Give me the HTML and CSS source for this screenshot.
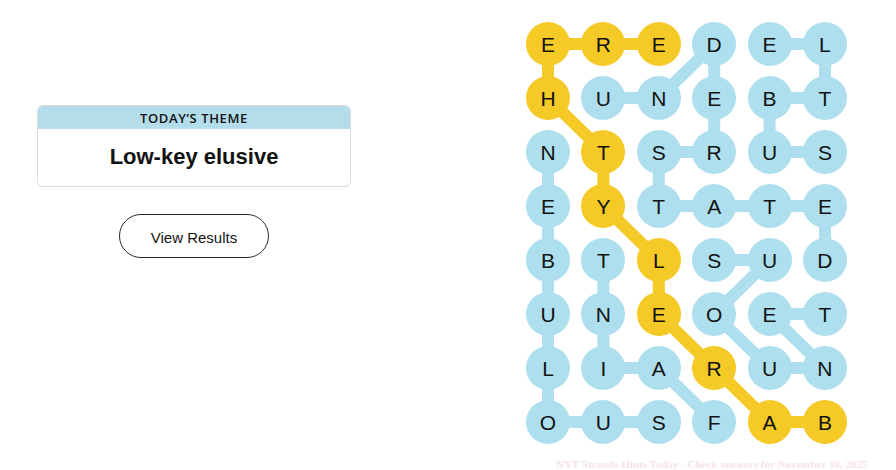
FILE: index.html
```html
<!DOCTYPE html>
<html>
<head>
<meta charset="utf-8">
<link rel="stylesheet" href="styles.css">
</head>
<body>
<div class="page">
  <div class="left">
    <div class="theme-card">
      <div class="theme-head">TODAY’S THEME</div>
      <div class="theme-body">Low-key elusive</div>
    </div>
    <button class="results-btn">View Results</button>
  </div>
  <div class="right">
    <div class="board">
      <svg class="links" width="322" height="422" viewBox="0 0 322 422">
        <g stroke="#aedfee" stroke-width="12" stroke-linecap="round" fill="none">
          <!-- UNDERSTATED -->
          <polyline points="77.4,76 132.8,76 188.2,22 188.2,76 188.2,130 132.8,130 132.8,184 188.2,184 243.6,184 299,184 299,238"/>
          <!-- SUBTLE -->
          <polyline points="299,130 243.6,130 243.6,76 299,76 299,22 243.6,22"/>
          <!-- NEBULOUS -->
          <polyline points="22,130 22,184 22,238 22,292 22,346 22,400 77.4,400 132.8,400"/>
          <!-- FAINT -->
          <polyline points="188.2,400 132.8,346 77.4,346 77.4,292 77.4,238"/>
          <!-- TENUOUS -->
          <polyline points="299,292 243.6,292 299,346 243.6,346 188.2,292 243.6,238 188.2,238"/>
        </g>
        <g stroke="#f5c926" stroke-width="12" stroke-linecap="round" fill="none">
          <!-- BARELYTHERE -->
          <polyline points="299,400 243.6,400 188.2,346 132.8,292 132.8,238 77.4,184 77.4,130 22,76 22,22 77.4,22 132.8,22"/>
        </g>
      </svg>
      <div class="grid">
        <span class="cell span">E</span><span class="cell span">R</span><span class="cell span">E</span><span class="cell">D</span><span class="cell">E</span><span class="cell">L</span>
        <span class="cell span">H</span><span class="cell">U</span><span class="cell">N</span><span class="cell">E</span><span class="cell">B</span><span class="cell">T</span>
        <span class="cell">N</span><span class="cell span">T</span><span class="cell">S</span><span class="cell">R</span><span class="cell">U</span><span class="cell">S</span>
        <span class="cell">E</span><span class="cell span">Y</span><span class="cell">T</span><span class="cell">A</span><span class="cell">T</span><span class="cell">E</span>
        <span class="cell">B</span><span class="cell">T</span><span class="cell span">L</span><span class="cell">S</span><span class="cell">U</span><span class="cell">D</span>
        <span class="cell">U</span><span class="cell">N</span><span class="cell span">E</span><span class="cell">O</span><span class="cell">E</span><span class="cell">T</span>
        <span class="cell">L</span><span class="cell">I</span><span class="cell">A</span><span class="cell span">R</span><span class="cell">U</span><span class="cell">N</span>
        <span class="cell">O</span><span class="cell">U</span><span class="cell">S</span><span class="cell">F</span><span class="cell span">A</span><span class="cell span">B</span>
      </div>
    </div>
    <div class="watermark">NYT Strands Hints Today - Check answers for November 18, 2025</div>
  </div>
</div>
</body>
</html>
```

FILE: styles.css
```css
html, body {
  margin: 0;
  padding: 0;
  background: #ffffff;
  overflow: hidden;
}

body {
  width: 896px;
  height: 470px;
  font-family: "Liberation Sans", Arial, sans-serif;
  color: #121212;
}

.page {
  display: flex;
  align-items: flex-start;
}

.left {
  width: 314px;
  padding: 105px 37px 0 37px;
  display: flex;
  flex-direction: column;
  align-items: center;
}

.theme-card {
  width: 314px;
  box-sizing: border-box;
  border: 1px solid #dcdcdc;
  border-radius: 6px;
  overflow: hidden;
}

.theme-head {
  background: #b4ddec;
  height: 23px;
  line-height: 24px;
  text-align: center;
  font-family: "Open Sans", "Liberation Sans", sans-serif;
  font-size: 13px;
  font-weight: 600;
  letter-spacing: 0.6px;
  color: #121212;
}

.theme-body {
  height: 57px;
  line-height: 55px;
  text-align: center;
  font-size: 22px;
  font-weight: 700;
  color: #121212;
}

.results-btn {
  margin-top: 27px;
  width: 150px;
  height: 44px;
  border: 1px solid #2a2a2a;
  border-radius: 22px;
  background: #fff;
  font-family: "Liberation Sans", Arial, sans-serif;
  font-size: 15px;
  color: #121212;
  padding: 0;
  padding-top: 2px;
}

.right {
  margin-left: 138px;
  padding-top: 22px;
  display: flex;
  flex-direction: column;
}

.board {
  position: relative;
  width: 322px;
  height: 422px;
}

.links {
  position: absolute;
  left: 0;
  top: 0;
}

.grid {
  position: relative;
  display: grid;
  grid-template-columns: repeat(6, 44px);
  grid-auto-rows: 44px;
  column-gap: 11.4px;
  row-gap: 10px;
}

.cell {
  width: 44px;
  height: 44px;
  border-radius: 50%;
  background: #aedfee;
  display: flex;
  align-items: center;
  justify-content: center;
  font-size: 21px;
  line-height: 1;
  color: #121212;
}

.cell.span {
  background: #f5c926;
}

.watermark {
  margin-top: 14px;
  margin-left: 30px;
  white-space: nowrap;
  font-family: "Liberation Serif", serif;
  font-weight: 700;
  font-size: 11px;
  color: #f7e4e4;
}
```
